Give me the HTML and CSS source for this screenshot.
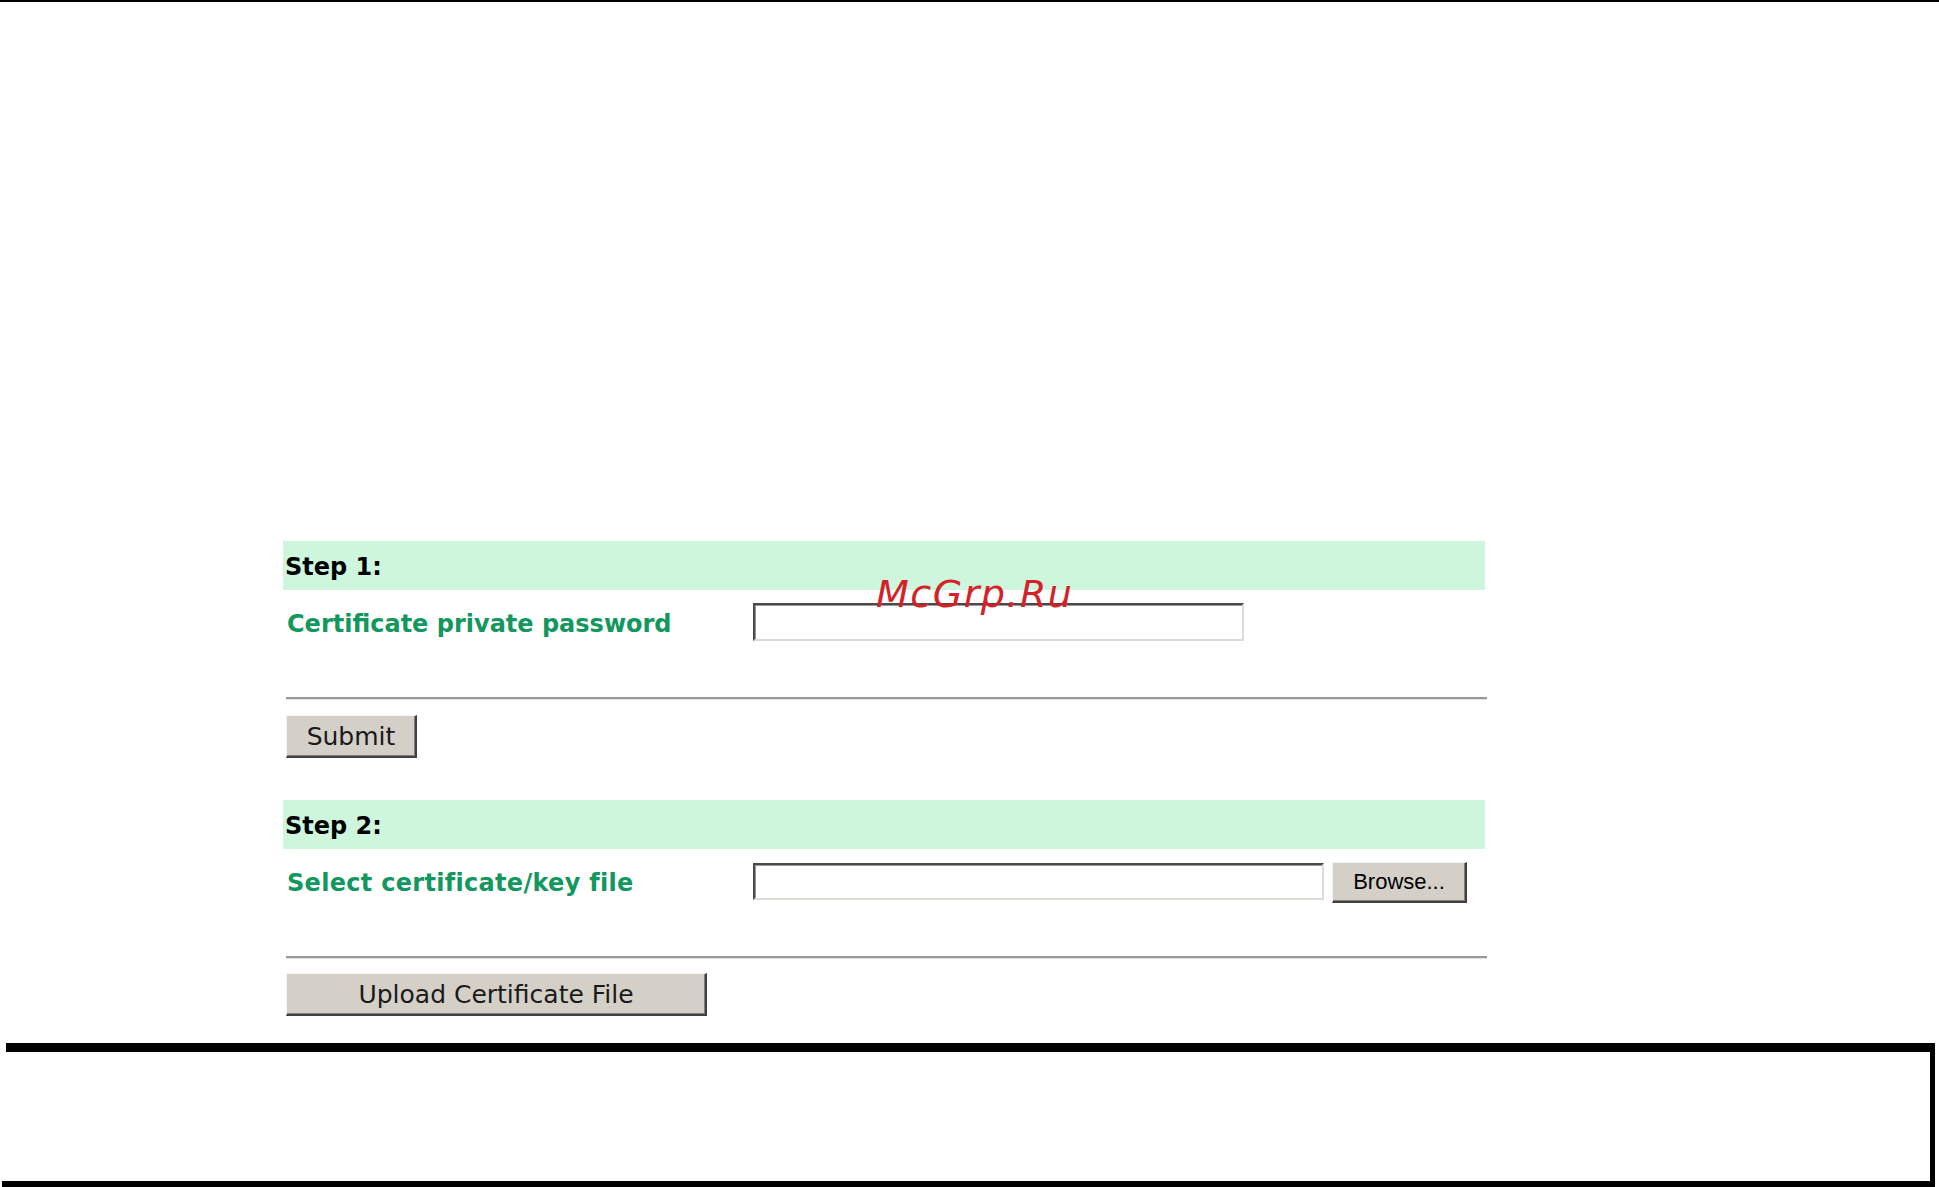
FILE: index.html
```html
<!DOCTYPE html>
<html>
<head>
<meta charset="utf-8">
<title>Certificate Upload</title>
<link rel="stylesheet" href="styles.css">
</head>
<body>
<div class="topline"></div>
<main class="panel">
  <div class="step">Step 1:</div>
  <div class="row row1">
    <label class="label" for="pw">Certificate private password</label>
    <input id="pw" class="field field-pw" type="password">
  </div>
  <div class="sep sep1"></div>
  <button class="btn btn-submit" type="button">Submit</button>

  <div class="step step2">Step 2:</div>
  <div class="row row2">
    <label class="label label2">Select certificate/key file</label>
    <div class="field field-file"></div>
    <button class="browse" type="button">Browse...</button>
  </div>
  <div class="sep sep2"></div>
  <button class="btn btn-upload" type="button">Upload Certificate File</button>
</main>
<div class="footer-box"></div>
<div class="watermark">McGrp.Ru</div>
</body>
</html>
```

FILE: styles.css
```css
html, body {
  margin: 0;
  padding: 0;
  background: #ffffff;
  overflow: hidden;
  height: 1187px;
}

body {
  position: relative;
  font-family: "DejaVu Sans", Verdana, sans-serif;
}

.topline {
  height: 2px;
  background: #000000;
}

.panel {
  margin: 539px 0 0 283px;
  width: 1202px;
}

.step {
  box-sizing: border-box;
  height: 49px;
  padding: 4px 0 0 2px;
  line-height: 45px;
  background: #cef6dc;
  font-family: "DejaVu Sans", Verdana, sans-serif;
  font-weight: bold;
  font-size: 24px;
  color: #000000;
}

.step2 {
  margin-top: 42px;
}

.row {
  display: flex;
  align-items: flex-start;
  padding-top: 13px;
}

.label {
  box-sizing: border-box;
  width: 470px;
  padding: 2px 0 0 4px;
  line-height: 38px;
  font-family: "DejaVu Sans", Verdana, sans-serif;
  font-weight: bold;
  font-size: 24px;
  color: #12975e;
}

.label2 {
  padding-top: 1px;
  line-height: 41px;
  letter-spacing: 0.3px;
}

.field {
  box-sizing: border-box;
  margin: 0;
  padding: 0;
  background: #ffffff;
  border-top: 2px solid #4a4a4a;
  border-left: 2px solid #4a4a4a;
  border-right: 2px solid #dedbd6;
  border-bottom: 2px solid #dedbd6;
  box-shadow: inset 1px 1px 0 #9a9a9a;
  outline: none;
}

.field-pw {
  width: 491px;
  height: 38px;
}

.field-file {
  width: 571px;
  height: 37px;
  margin-top: 1px;
}

.browse {
  box-sizing: border-box;
  width: 135px;
  height: 41px;
  margin: 0 0 0 8px;
  padding: 0;
  background: #d4d0c8;
  border-top: 1px solid #f4f4f4;
  border-left: 1px solid #f4f4f4;
  border-right: 2px solid #404040;
  border-bottom: 2px solid #404040;
  box-shadow: inset -1px -1px 0 #808080;
  font-family: "Liberation Sans", Arial, sans-serif;
  font-size: 22px;
  color: #000000;
}

.sep {
  width: 1201px;
  height: 0;
  margin-left: 3px;
  border-top: 2px solid #999999;
  border-bottom: 1px solid #e2e2e2;
}

.sep1 {
  margin-top: 54px;
}

.sep2 {
  margin-top: 52px;
}

.btn {
  display: block;
  box-sizing: border-box;
  height: 43px;
  margin: 14px 0 0 3px;
  padding: 0;
  background: #d4d0c8;
  border-top: 1px solid #f4f4f4;
  border-left: 1px solid #f4f4f4;
  border-right: 2px solid #404040;
  border-bottom: 2px solid #404040;
  box-shadow: inset -1px -1px 0 #808080;
  font-family: "DejaVu Sans", Verdana, sans-serif;
  font-size: 25px;
  color: #1a1a1a;
}

.btn-submit {
  width: 131px;
  margin-top: 15px;
}

.btn-upload {
  width: 421px;
}

.footer-box {
  position: relative;
  box-sizing: border-box;
  width: 1933px;
  height: 147px;
  margin: 27px 0 0 2px;
  border-right: 5px solid #000000;
  border-bottom: 9px solid #000000;
}

.footer-box::before {
  content: "";
  position: absolute;
  top: 0;
  left: 4px;
  right: 0;
  height: 9px;
  background: #000000;
}

.watermark {
  position: absolute;
  top: 575px;
  left: 876px;
  font-family: "DejaVu Sans", Verdana, sans-serif;
  font-style: italic;
  font-size: 38px;
  line-height: 38px;
  letter-spacing: 1.5px;
  color: #d42228;
}
```
